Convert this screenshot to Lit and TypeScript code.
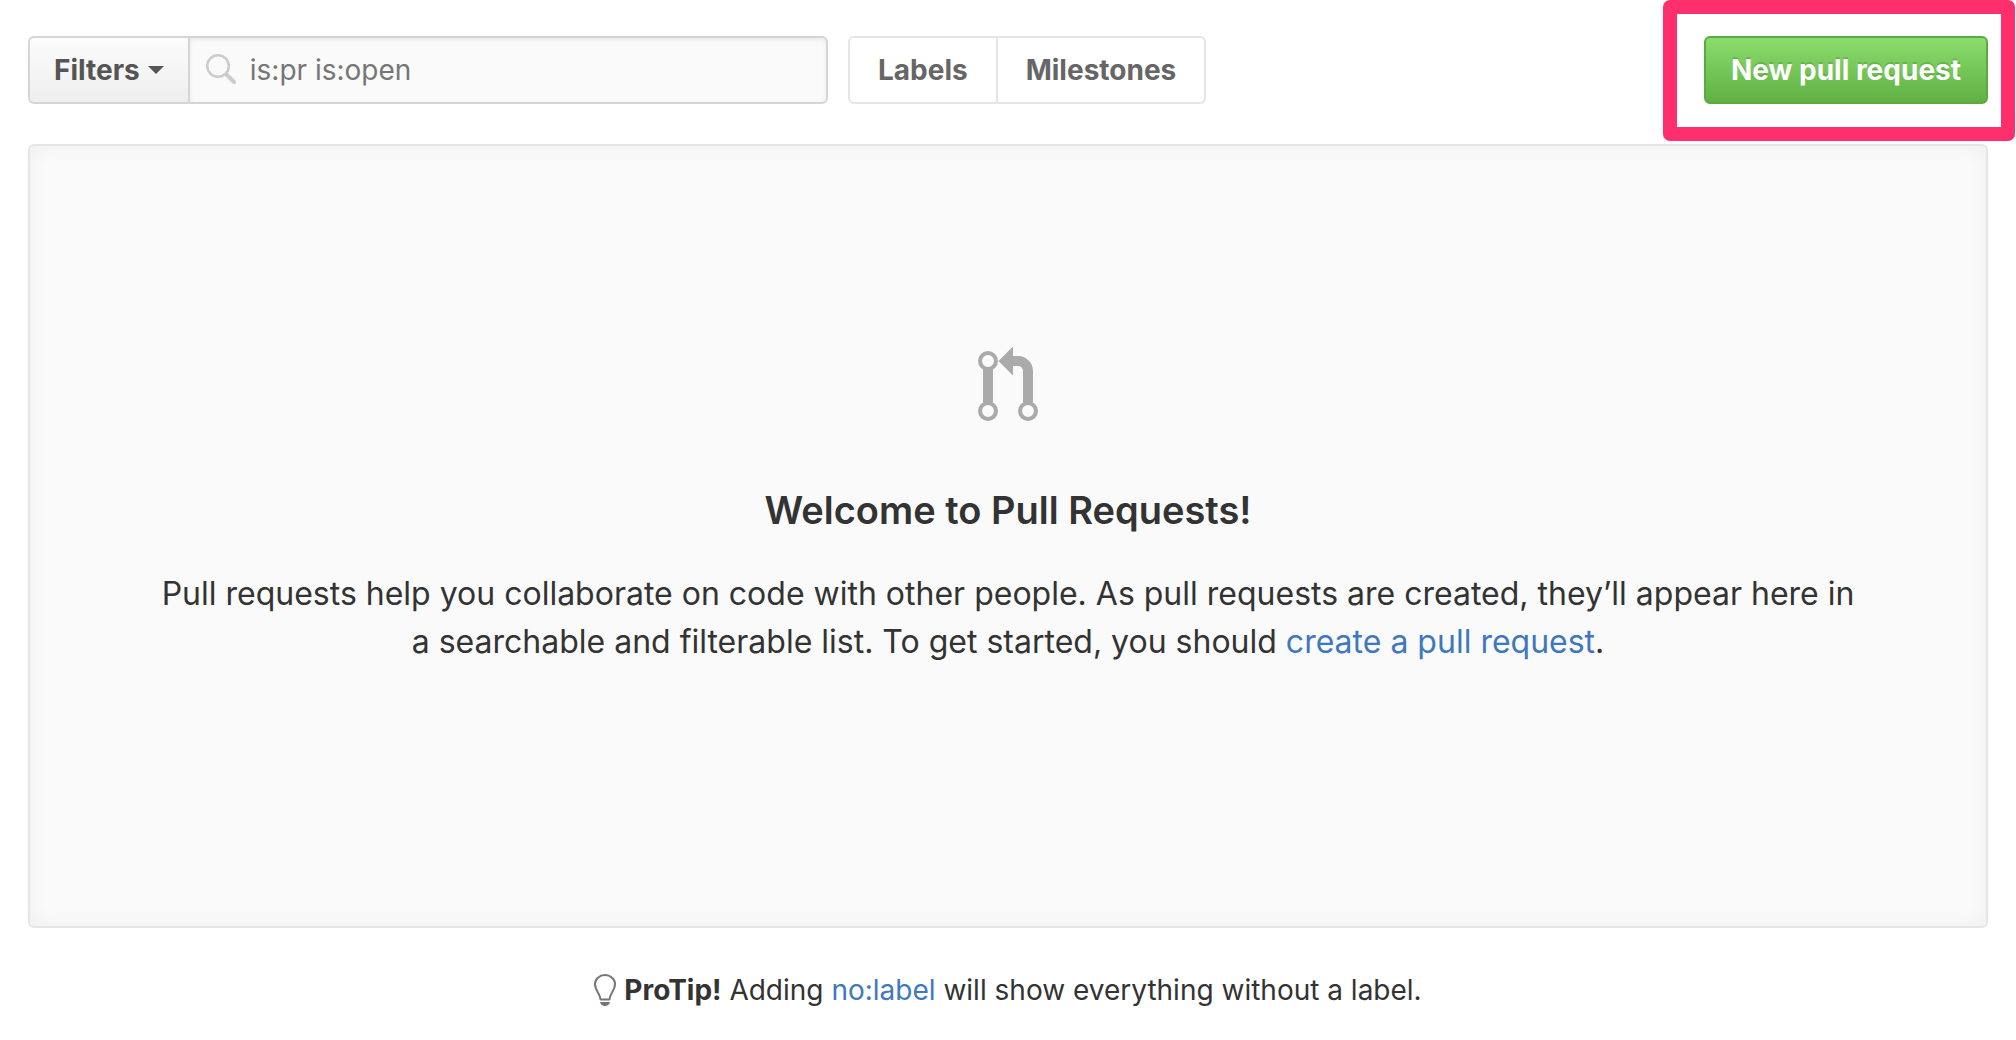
import { LitElement, html, css } from "lit";
import { customElement, state } from "lit/decorators.js";

@customElement("app-root")
export class AppRoot extends LitElement {
  @state() private query = "is:pr is:open";

  static styles = css`
    :host {
      display: block;
      box-sizing: border-box;
      padding: 36px 28px 12px;
      background: #fff;
      color: #333;
      font-family: Inter, "Liberation Sans", sans-serif;
      font-size: 28px;
      line-height: 40px;
    }
    * {
      box-sizing: border-box;
    }
    a {
      color: #4078c0;
      text-decoration: none;
    }
    .toolbar {
      display: flex;
      align-items: stretch;
      gap: 20px;
      height: 68px;
    }
    .search {
      display: flex;
      width: 800px;
    }
    .filters {
      display: flex;
      align-items: center;
      gap: 8px;
      padding: 0 24px;
      border: 2px solid #d5d5d5;
      border-right: 0;
      border-radius: 6px 0 0 6px;
      background: linear-gradient(#fcfcfc, #eee);
      color: #555;
      font: inherit;
      font-weight: 700;
    }
    .caret {
      width: 16px;
      height: 8px;
      fill: currentColor;
    }
    .field {
      display: flex;
      flex: 1;
      align-items: center;
      gap: 14px;
      min-width: 0;
      padding-left: 16px;
      border: 2px solid #d5d5d5;
      border-radius: 0 6px 6px 0;
      background: #fafafa;
      box-shadow: inset 0 2px 4px rgba(0, 0, 0, 0.075);
    }
    .lens {
      flex: none;
      width: 30px;
      height: 32px;
    }
    .query {
      flex: 1;
      min-width: 0;
      padding: 0;
      border: 0;
      outline: 0;
      background: none;
      color: #767676;
      font: inherit;
    }
    .subnav {
      display: flex;
      border: 2px solid #e5e5e5;
      border-radius: 6px;
    }
    .subnav-item {
      display: flex;
      align-items: center;
      padding: 0 28px;
      color: #666;
      font-weight: 700;
    }
    .subnav-item + .subnav-item {
      border-left: 2px solid #e5e5e5;
    }
    .action {
      position: relative;
      display: flex;
      margin-left: auto;
    }
    .new {
      padding: 0 25px;
      border: 2px solid #5ca941;
      border-radius: 6px;
      background: linear-gradient(#8add6d, #60b044);
      color: #fff;
      font: inherit;
      font-weight: 700;
      text-shadow: 0 -2px 0 rgba(0, 0, 0, 0.15);
    }
    .highlight {
      position: absolute;
      inset: -36px -27px -37px -41px;
      border: 14px solid #ff2e6c;
      border-radius: 7px;
      pointer-events: none;
    }
    .blank {
      display: flex;
      flex-direction: column;
      align-items: center;
      margin-top: 40px;
      padding: 200px 120px 260px;
      border: 2px solid #e5e5e5;
      border-radius: 6px;
      background: #fafafa;
      box-shadow: inset 0 0 20px rgba(0, 0, 0, 0.05);
      text-align: center;
    }
    .pr-icon {
      width: 60px;
      height: 76px;
    }
    h1 {
      margin: 60px 0 0;
      font-size: 38px;
      font-weight: 600;
      line-height: 56px;
    }
    .blank p {
      margin: 32px 0 0;
      font-size: 32px;
      line-height: 48px;
    }
    .tip {
      display: flex;
      justify-content: center;
      align-items: center;
      gap: 8px;
      margin: 42px 0 0;
    }
    .tip strong {
      font-weight: 700;
    }
    .bulb {
      width: 22px;
      height: 32px;
    }
  `;

  private onInput(e: Event) {
    this.query = (e.target as HTMLInputElement).value;
  }

  render() {
    return html`
      <header class="toolbar">
        <form class="search" role="search" @submit=${(e: Event) => e.preventDefault()}>
          <button class="filters" type="button">
            Filters
            <svg class="caret" viewBox="0 0 16 8" aria-hidden="true"><path d="M0 0h16L8 8z" /></svg>
          </button>
          <label class="field">
            <svg class="lens" viewBox="0 0 30 32" aria-hidden="true" fill="none" stroke="#ccc">
              <circle cx="12" cy="12" r="10.8" stroke-width="2.500" />
              <path d="M21 21l7 7" stroke-width="4" stroke-linecap="round" />
            </svg>
            <input class="query" type="text" aria-label="Search pull requests" .value=${this.query} @input=${this.onInput} />
          </label>
        </form>
        <nav class="subnav">
          <a class="subnav-item" href="#labels">Labels</a>
          <a class="subnav-item" href="#milestones">Milestones</a>
        </nav>
        <div class="action">
          <button class="new" type="button">New pull request</button>
          <span class="highlight"></span>
        </div>
      </header>
      <main class="blank">
        <svg class="pr-icon" viewBox="0 0 60 76" aria-hidden="true" fill="#aaa">
          <path d="M5 22h10v34H5zM20.500 15L35 0.500V10h5a15 15 0 0 1 15 15v31H45V25a5 5 0 0 0-5-5h-5v9.500z" />
          <g fill="#fafafa" stroke="#aaa" stroke-width="4">
            <circle cx="10" cy="15" r="8" />
            <circle cx="10" cy="65" r="8" />
            <circle cx="50" cy="65" r="8" />
          </g>
        </svg>
        <h1>Welcome to Pull Requests!</h1>
        <p>
          Pull requests help you collaborate on code with other people. As pull requests are created,
          they’ll appear here in a searchable and filterable list. To get started, you should
          <a href="#compare">create a pull request</a>.
        </p>
      </main>
      <p class="tip">
        <svg class="bulb" viewBox="0 0 22 32" aria-hidden="true" fill="none" stroke="#767676" stroke-width="2">
          <path d="M6.500 25.500C6.500 20 1 16.500 1 10a10 9 0 0 1 20 0C21 16.500 15.500 20 15.500 25.500z" stroke-linejoin="round" />
          <path d="M6 28h10c-.5 2.500-2.300 4-5 4s-4.500-1.500-5-4z" fill="#767676" stroke="none" />
        </svg>
        <span><strong>ProTip!</strong> Adding <a href="#no-label">no:label</a> will show everything without a label.</span>
      </p>
    `;
  }
}
